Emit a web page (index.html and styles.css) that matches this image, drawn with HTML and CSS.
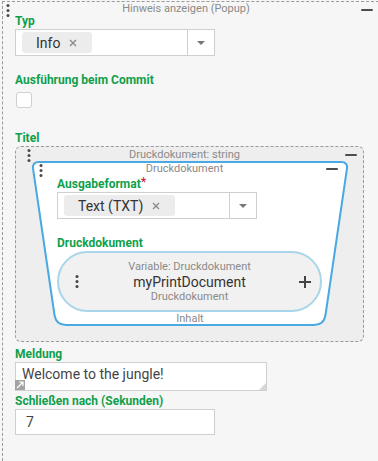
FILE: index.html
```html
<!DOCTYPE html>
<html lang="de">
<head>
    <meta charset="UTF-8">
    <title>Hinweis anzeigen</title>
    <link rel="stylesheet" href="styles.css">
</head>
<body>
    <div class="block">
        <div class="block-head">
            <svg class="dots" width="4" height="13" viewBox="0 0 4 13"><circle cx="2" cy="1.5" r="1.5"/><circle cx="2" cy="6.5" r="1.5"/><circle cx="2" cy="11.5" r="1.5"/></svg>
            <span class="block-title">Hinweis anzeigen (Popup)</span>
            <span class="minus"></span>
        </div>
        <div class="block-body">
            <div class="field field-typ">
                <div class="label">Typ</div>
                <div class="select">
                    <div class="select-value">
                        <span class="chip">Info<svg class="chip-x" width="8" height="8" viewBox="0 0 8 8"><path d="M1 1L7 7M7 1L1 7"/></svg></span>
                    </div>
                    <div class="select-arrow"><span class="caret"></span></div>
                </div>
            </div>

            <div class="field field-commit">
                <div class="label">Ausführung beim Commit</div>
                <div class="checkbox"></div>
            </div>

            <div class="field field-titel">
                <div class="label">Titel</div>
                <div class="group">
                    <div class="group-head">
                        <svg class="dots" width="4" height="13" viewBox="0 0 4 13"><circle cx="2" cy="1.5" r="1.5"/><circle cx="2" cy="6.5" r="1.5"/><circle cx="2" cy="11.5" r="1.5"/></svg>
                        <span class="block-title">Druckdokument: string</span>
                        <span class="minus"></span>
                    </div>
                    <div class="card">
                        <svg class="card-shape" width="318" height="165" viewBox="0 0 318 165"><path d="M8 1H310Q317 1 315.9 8L294.5 154Q293 164 283 164H35Q25 164 23.5 154L2.1 8Q1 1 8 1Z"/></svg>
                        <div class="card-head">
                            <svg class="dots" width="4" height="13" viewBox="0 0 4 13"><circle cx="2" cy="1.5" r="1.5"/><circle cx="2" cy="6.5" r="1.5"/><circle cx="2" cy="11.5" r="1.5"/></svg>
                            <span class="block-title">Druckdokument</span>
                            <span class="minus"></span>
                        </div>
                        <div class="card-body">
                            <div class="field field-format">
                                <div class="label">Ausgabeformat<span class="req">*</span></div>
                                <div class="select">
                                    <div class="select-value">
                                        <span class="chip">Text (TXT)<svg class="chip-x" width="8" height="8" viewBox="0 0 8 8"><path d="M1 1L7 7M7 1L1 7"/></svg></span>
                                    </div>
                                    <div class="select-arrow"><span class="caret"></span></div>
                                </div>
                            </div>
                            <div class="field">
                                <div class="label">Druckdokument</div>
                                <div class="pill">
                                    <svg class="dots" width="4" height="13" viewBox="0 0 4 13"><circle cx="2" cy="1.5" r="1.5"/><circle cx="2" cy="6.5" r="1.5"/><circle cx="2" cy="11.5" r="1.5"/></svg>
                                    <div class="pill-text">
                                        <div class="pill-sub">Variable: Druckdokument</div>
                                        <div class="pill-name">myPrintDocument</div>
                                        <div class="pill-sub">Druckdokument</div>
                                    </div>
                                    <svg class="plus" width="12" height="12" viewBox="0 0 12 12"><path d="M6 0V12M0 6H12"/></svg>
                                </div>
                            </div>
                        </div>
                        <div class="card-foot">Inhalt</div>
                    </div>
                </div>
            </div>

            <div class="field field-meldung">
                <div class="label">Meldung</div>
                <div class="textarea">
                    Welcome to the jungle!
                    <span class="expand"><svg width="8" height="8" viewBox="0 0 8 8"><path d="M1 7L7 1M3 1H7V5"/></svg></span>
                    <span class="grip"></span>
                </div>
            </div>

            <div class="field field-close">
                <div class="label">Schließen nach (Sekunden)</div>
                <div class="input">7</div>
            </div>
        </div>
    </div>
</body>
</html>
```

FILE: styles.css
```css
body {
    margin: 0;
    background: #f6f6f6;
    font-family: Roboto, "Liberation Sans", Arial, sans-serif;
    color: #333;
    overflow: hidden;
}

.block {
    margin: 1px 0 0 2px;
    width: 377px;
    height: 460px;
    box-sizing: border-box;
    border: 1px dashed #9a9a9a;
    border-right: none;
    border-bottom: none;
}

/* shared header rows */
.block-head,
.group-head,
.card-head {
    display: grid;
    grid-template-columns: 20px 1fr 30px;
    align-items: start;
}

.block-head {
    height: 12px;
}

.block-title {
    font-size: 11px;
    line-height: 14px;
    color: #8a8a8a;
    text-align: center;
    white-space: nowrap;
}

.dots {
    display: block;
    fill: #4a4a4a;
}

.block-head .dots {
    margin: 2px 0 0 3px;
}

.minus {
    justify-self: end;
    width: 12px;
    height: 2px;
    border-radius: 1px;
    background: #4d4d4d;
}

.block-head .minus {
    margin: 7px 6px 0 0;
}

.block-body {
    padding: 0 12px;
}

/* fields */
.label {
    font-size: 12px;
    line-height: 14px;
    font-weight: bold;
    color: #0f9f4b;
    margin-bottom: 1px;
}

.req {
    color: #d0112b;
    font-weight: normal;
    font-size: 13px;
    vertical-align: 2px;
}

.field-typ {
    margin-bottom: 17px;
}

.select {
    display: flex;
    width: 200px;
    height: 27px;
    box-sizing: border-box;
    border: 1px solid #cfcfcf;
    background: #fff;
}

.select-value {
    flex: 1;
    padding: 2px 6px;
}

.chip {
    display: inline-flex;
    align-items: center;
    gap: 9px;
    height: 21px;
    padding: 0 15px 0 14px;
    border-radius: 3px;
    background: #ececec;
    font-size: 14px;
    color: #333;
}

.chip-x {
    stroke: #8a8a8a;
    stroke-width: 1.4;
}

.select-arrow {
    width: 26px;
    border-left: 1px solid #cfcfcf;
    display: flex;
    align-items: center;
    justify-content: center;
}

.caret {
    width: 0;
    height: 0;
    border-left: 4px solid transparent;
    border-right: 4px solid transparent;
    border-top: 4px solid #777;
    margin-top: 1px;
}

.field-commit {
    margin-bottom: 23px;
}

.checkbox {
    width: 16px;
    height: 16px;
    box-sizing: border-box;
    margin: 5px 0 0 1px;
    border: 1px solid #cfcfcf;
    border-radius: 3px;
    background: #fff;
}

/* nested group */
.group {
    width: 349px;
    box-sizing: border-box;
    border: 1px dashed #9a9a9a;
    border-radius: 6px;
    background: #eeeeee;
    padding-bottom: 13px;
}

.group-head {
    height: 14px;
    align-items: center;
}

.group-head .dots {
    margin: 2px 0 0 11px;
}

.group-head .minus {
    margin-right: 6px;
}

.card {
    position: relative;
    margin-left: 15px;
    width: 318px;
}

.card-shape {
    position: absolute;
    top: 0;
    left: 0;
    fill: #fff;
    stroke: #4aa9e2;
    stroke-width: 2;
}

.card-head,
.card-body,
.card-foot {
    position: relative;
}

.card-head {
    grid-template-columns: 19px 1fr 30px;
    height: 13px;
    padding-top: 1px;
}

.card-head .dots {
    margin: 2px 0 0 8px;
}

.card-head .minus {
    margin: 6px 11px 0 0;
}

.card-body {
    padding-left: 26px;
}

.field-format {
    margin-bottom: 17px;
}

.pill {
    display: grid;
    grid-template-columns: 30px 1fr 30px;
    align-items: center;
    width: 265px;
    height: 61px;
    box-sizing: border-box;
    border: 2px solid #a8d6e8;
    border-radius: 31px;
    background: #f1f1f1;
}

.pill .dots {
    margin-left: 16px;
    fill: #444;
}

.pill-text {
    text-align: center;
}

.pill-sub {
    font-size: 11px;
    line-height: 14px;
    color: #8a8a8a;
}

.pill-name {
    font-size: 14px;
    line-height: 16px;
    color: #333;
}

.plus {
    justify-self: end;
    margin-right: 9px;
    stroke: #444;
    stroke-width: 2;
}

.card-foot {
    font-size: 11px;
    line-height: 14px;
    color: #8a8a8a;
    text-align: center;
    padding-bottom: 2px;
}

/* bottom inputs */
.field-meldung {
    margin-top: 5px;
    margin-bottom: 3px;
}

.textarea {
    position: relative;
    width: 252px;
    height: 29px;
    box-sizing: border-box;
    border: 1px solid #cfcfcf;
    background: #fff;
    padding: 3px 6px 0;
    font-size: 14px;
    line-height: 16px;
    color: #444;
}

.expand {
    position: absolute;
    left: -1px;
    bottom: 0;
    width: 10px;
    height: 10px;
    background: #a3a3a3;
    display: flex;
    align-items: center;
    justify-content: center;
}

.expand svg {
    stroke: #fff;
    stroke-width: 1.2;
    fill: none;
}

.grip {
    position: absolute;
    right: 0;
    bottom: 0;
    width: 0;
    height: 0;
    border-left: 7px solid transparent;
    border-bottom: 7px solid #d6d6d6;
}

.input {
    width: 200px;
    height: 26px;
    box-sizing: border-box;
    border: 1px solid #cfcfcf;
    background: #fff;
    padding: 4px 0 0 10px;
    font-size: 14px;
    line-height: 16px;
    color: #444;
}
```
